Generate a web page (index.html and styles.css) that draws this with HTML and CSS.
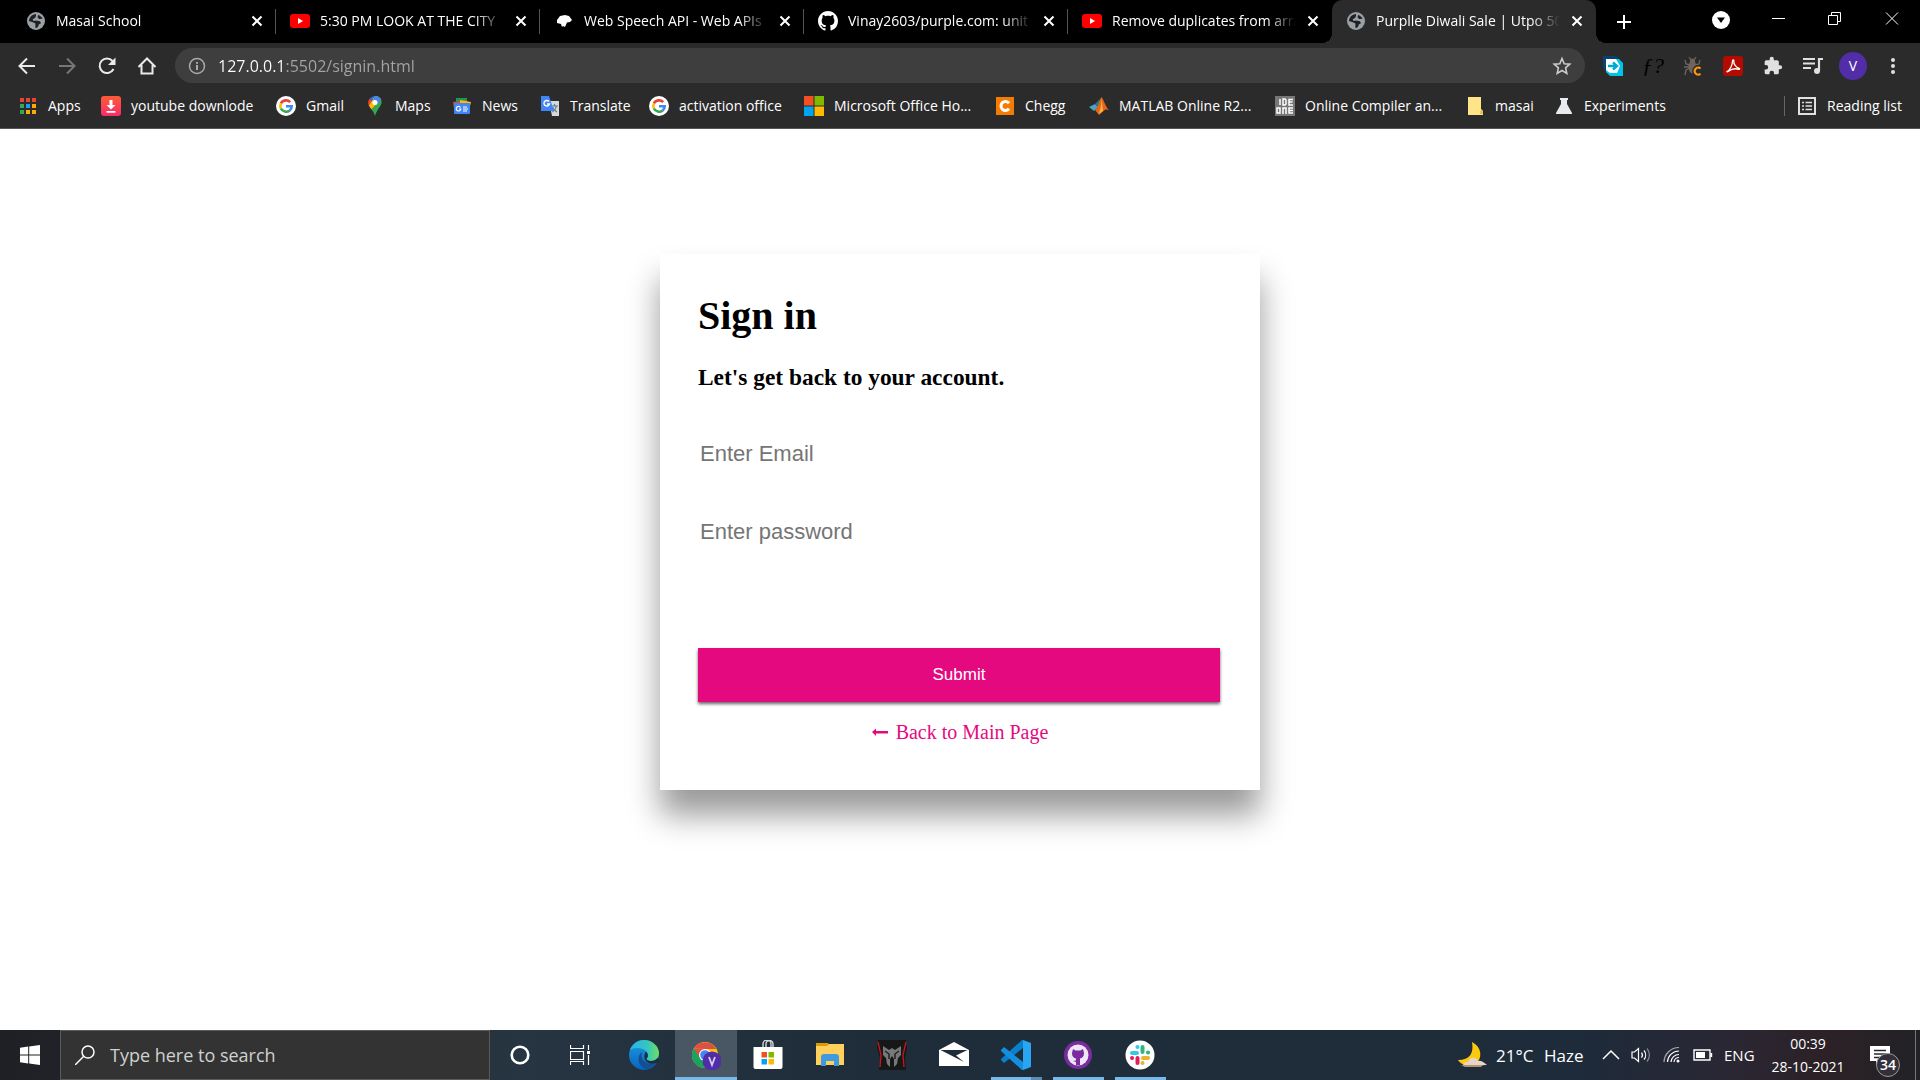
FILE: index.html
```html
<!DOCTYPE html>
<html lang="en">
<head>
<meta charset="utf-8">
<title>Purplle Diwali Sale | Utpo 50% off</title>
<link rel="stylesheet" href="styles.css">
</head>
<body>
<svg class="defs" aria-hidden="true">
  <symbol id="globe" viewBox="0 0 20 20"><circle cx="10" cy="10" r="9" fill="#9aa0a6"/><path d="M10 3c-3 .2-5 1.600-6.500 4.500L2.800 10l4 1.200 2.600 1.300v4.600c2.500 0 3-1.600 3.400-3.500l2.200-1.400-1-1.900-4-.9-2.500.5-.8-1.600 2.600-1.600.7-2zM12 4l-.4 2.200L13 8l3.600-.2C16 6 14 4.500 12 4z" fill="#202124"/></symbol>
  <symbol id="youtube" viewBox="0 0 20 20"><rect y="3" width="20" height="14" rx="3" fill="#f00"/><path d="M8 7l5 3-5 3z" fill="#fff"/></symbol>
  <symbol id="close" viewBox="0 0 12 12"><path d="M1.500 1.500l9 9M10.500 1.500l-9 9" stroke="#fff" stroke-width="2" fill="none"/></symbol>
  <symbol id="octocat" viewBox="0 0 16 16"><path d="M8 0C3.580 0 0 3.580 0 8c0 3.540 2.290 6.530 5.470 7.590.4.070.55-.17.55-.38 0-.19-.01-.82-.01-1.490-2.010.37-2.530-.49-2.690-.94-.09-.23-.48-.94-.82-1.130-.28-.15-.68-.52-.01-.53.63-.01 1.080.58 1.230.82.72 1.210 1.870.87 2.330.66.07-.52.28-.87.51-1.070-1.780-.2-3.640-.89-3.640-3.950 0-.87.31-1.590.82-2.150-.08-.2-.36-1.020.08-2.120 0 0 .67-.21 2.200.82.640-.18 1.320-.27 2-.27s1.360.09 2 .27c1.530-1.040 2.200-.82 2.200-.82.44 1.100.16 1.920.08 2.120.51.56.82 1.270.82 2.150 0 3.070-1.870 3.750-3.650 3.950.29.25.54.73.54 1.480 0 1.070-.01 1.930-.01 2.200 0 .21.15.46.55.38A8.010 8.010 0 0 0 16 8c0-4.420-3.580-8-8-8z"/></symbol>
  <symbol id="google" viewBox="0 0 20 20"><circle cx="10" cy="10" r="10" fill="#fff"/><g fill="none" stroke-width="2.600"><path d="M14.200 6.200A5.700 5.700 0 0 0 4.900 7.500" stroke="#ea4335"/><path d="M4.900 7.500a5.700 5.700 0 0 0 0 5" stroke="#fbbc05"/><path d="M4.900 12.500a5.700 5.700 0 0 0 8.800 1.900" stroke="#34a853"/><path d="M13.700 14.400a5.700 5.700 0 0 0 2-4.200H10" stroke="#4285f4"/></g></symbol>
  <symbol id="winflag" viewBox="0 0 20 20"><path d="M0 0h9.500v9.500H0z" fill="#f25022"/><path d="M10.500 0H20v9.500h-9.500z" fill="#7fba00"/><path d="M0 10.500h9.500V20H0z" fill="#00a4ef"/><path d="M10.500 10.500H20V20h-9.500z" fill="#ffb900"/></symbol>
</svg>

<header class="browser">
  <div class="tabs">
    <div class="tab"><svg class="ico"><use href="#globe"/></svg><span class="title">Masai School</span><button class="x" aria-label="Close tab"><svg><use href="#close"/></svg></button></div>
    <div class="tab"><svg class="ico"><use href="#youtube"/></svg><span class="title">5:30 PM LOOK AT THE CITY</span><button class="x" aria-label="Close tab"><svg><use href="#close"/></svg></button></div>
    <div class="tab"><svg class="ico" viewBox="0 0 20 20"><path d="M3 9l3-4 5-1 4 1 3 4-2 2-3 .5-2 4.500-2-1-1 1-1-3-4-1z" fill="#fff"/></svg><span class="title">Web Speech API - Web APIs</span><button class="x" aria-label="Close tab"><svg><use href="#close"/></svg></button></div>
    <div class="tab"><svg class="ico" fill="#fff"><use href="#octocat"/></svg><span class="title">Vinay2603/purple.com: unit</span><button class="x" aria-label="Close tab"><svg><use href="#close"/></svg></button></div>
    <div class="tab last"><svg class="ico"><use href="#youtube"/></svg><span class="title">Remove duplicates from arra</span><button class="x" aria-label="Close tab"><svg><use href="#close"/></svg></button></div>
    <div class="tab active"><svg class="ico"><use href="#globe"/></svg><span class="title">Purplle Diwali Sale | Utpo 50</span><button class="x" aria-label="Close tab"><svg><use href="#close"/></svg></button></div>
    <button class="new-tab" aria-label="New tab"><svg class="s16" viewBox="0 0 16 16"><path d="M8 1v14M1 8h14" stroke="#fff" stroke-width="2"/></svg></button>
    <div class="window-controls">
      <button aria-label="Search tabs"><svg class="ico" viewBox="0 0 20 20"><circle cx="10" cy="11" r="9" fill="#fff"/><path d="M6 8.500h8L10 14z" fill="#000"/></svg></button>
      <button aria-label="Minimize"><svg class="s16" viewBox="0 0 16 16"><path d="M2 7.500h13" stroke="#fff"/></svg></button>
      <button aria-label="Restore"><svg class="s16" viewBox="0 0 16 16"><path d="M1.500 4.500h9v9h-9zM4.500 4V1.500h9v9H11" fill="none" stroke="#fff"/></svg></button>
      <button aria-label="Close"><svg class="s16" viewBox="0 0 16 16"><path d="M2 1.500l12 12M14 1.500l-12 12" stroke="#fff"/></svg></button>
    </div>
  </div>

  <div class="toolbar">
    <button class="tool" aria-label="Back"><svg class="ico" viewBox="0 0 20 20"><path d="M18 10H3M10 2.500L2.500 10l7.500 7.500" fill="none" stroke="#e8eaed" stroke-width="2"/></svg></button>
    <button class="tool" aria-label="Forward"><svg class="ico" viewBox="0 0 20 20"><path d="M2 10h15M10 2.500l7.500 7.500-7.500 7.500" fill="none" stroke="#777" stroke-width="2"/></svg></button>
    <button class="tool" aria-label="Reload"><svg class="ico" viewBox="0 0 20 20"><path d="M16.500 13A7.300 7.300 0 1 1 15.500 5" fill="none" stroke="#e8eaed" stroke-width="2"/><path d="M18.500 1.500v7.500H11z" fill="#e8eaed"/></svg></button>
    <button class="tool" aria-label="Home"><svg class="ico" viewBox="0 0 20 20"><path d="M1.500 11L10 2.500l8.500 8.500M4.500 9v8.500h11V9" fill="none" stroke="#e8eaed" stroke-width="2"/></svg></button>
    <div class="omnibox">
      <svg class="ico" viewBox="0 0 20 20"><circle cx="10" cy="10" r="7.500" fill="none" stroke="#aaa" stroke-width="1.500"/><path d="M10 9v5M10 6v1.800" stroke="#aaa" stroke-width="2"/></svg>
      <input class="url" type="text" aria-label="Address" value="127.0.0.1:5502/signin.html">
      <button class="bare" aria-label="Bookmark this page"><svg class="ico" viewBox="0 0 20 20"><path d="M10 2.500l2.200 5.200 5.600.5-4.200 3.700 1.200 5.500-4.800-2.900-4.800 2.900 1.200-5.500-4.200-3.700 5.600-.5z" fill="none" stroke="#ccc" stroke-width="1.600"/></svg></button>
    </div>
    <div class="extensions">
      <button class="tool" aria-label="Share extension"><svg class="ico" viewBox="0 0 20 20"><path d="M0 0h13l3 3v12H3l-3-3z" fill="#064273"/><path d="M3 3h13l4 4v13H7l-4-4z" fill="#00c4e6"/><path d="M3 3h10l4 7-3 7H7l-4-3z" fill="#fff"/><path d="M5 10h8M10 6.500l4 3.500-4 3.500" fill="none" stroke="#00a9d4" stroke-width="2.400"/></svg></button>
      <button class="tool fx" aria-label="Function help">ƒ?</button>
      <button class="tool" aria-label="Bug extension"><svg class="ico" viewBox="0 0 20 20"><g stroke="#6d645d" stroke-width="1.300" fill="none"><path d="M6 1l2 3M13 1l-2 3M2 4l1 4 4 1M17 4l-1 4-4 1M1 11h6M2 19l1-5 4-2M12 11h6"/></g><ellipse cx="9.500" cy="11" rx="4" ry="6.500" fill="#6d645d"/><circle cx="9.500" cy="5" r="2.500" fill="#6d645d"/><path d="M17.500 12.500a3.500 3.500 0 1 0 0 5.200" fill="none" stroke="#2b2b2b" stroke-width="5"/><path d="M17.500 12.500a3.500 3.500 0 1 0 0 5.200" fill="none" stroke="#ff9410" stroke-width="2.200"/></svg></button>
      <button class="tool" aria-label="PDF tools"><svg class="ico" viewBox="0 0 20 20"><rect width="20" height="20" rx="3" fill="#b30b00"/><path d="M4 15.500c3-1.500 5.500-6.500 5.500-10.500 0-1.500 1.500-1.500 1.300 0-.3 3 2 6.500 5.400 7.300.8.300.5 1.200-.4 1-3.300-1-7.800 0-10.300 2-1 .8-2 .7-1.500.2z" fill="none" stroke="#fff" stroke-width="1.300"/></svg></button>
      <button class="tool" aria-label="Extensions"><svg class="ico" viewBox="0 0 24 24"><path d="M20.500 11H19V7a2 2 0 0 0-2-2h-4V3.500a2.500 2.500 0 0 0-5 0V5H4a2 2 0 0 0-2 2v3.800h1.500a2.700 2.700 0 0 1 0 5.400H2V20a2 2 0 0 0 2 2h3.800v-1.500a2.700 2.700 0 0 1 5.400 0V22H17a2 2 0 0 0 2-2v-4h1.500a2.500 2.500 0 0 0 0-5z" fill="#e0e0e0"/></svg></button>
      <button class="tool" aria-label="Media controls"><svg class="ico" viewBox="0 0 20 20"><path d="M0 3h12M0 7.500h12M0 12h8" stroke="#e0e0e0" stroke-width="2"/><path d="M16 15V3h4" fill="none" stroke="#e0e0e0" stroke-width="2.200"/><circle cx="14" cy="15" r="3" fill="#e0e0e0"/></svg></button>
      <button class="tool" aria-label="Profile"><span class="avatar">V</span></button>
      <button class="tool" aria-label="Menu"><svg class="ico" viewBox="0 0 20 20"><g fill="#e0e0e0"><circle cx="10" cy="4" r="2"/><circle cx="10" cy="10" r="2"/><circle cx="10" cy="16" r="2"/></g></svg></button>
    </div>
  </div>

  <nav class="bookmarks">
    <a href="#"><svg class="ico" viewBox="0 0 20 20"><path d="M2 2h4v4H2zM8 2h4v4H8zM14 2h4v4h-4z" fill="#ea4335"/><path d="M2 8h4v4H2zM2 14h4v4H2z" fill="#34a853"/><path d="M8 8h4v4H8z" fill="#1a9cf0"/><path d="M14 8h4v4h-4zM8 14h4v4H8zM14 14h4v4h-4z" fill="#fbab05"/></svg>Apps</a>
    <a href="#"><svg class="ico" viewBox="0 0 20 20"><defs><linearGradient id="dl" x2="0" y2="1"><stop stop-color="#ff5a36"/><stop offset="1" stop-color="#f72c68"/></linearGradient></defs><rect width="20" height="20" rx="3" fill="url(#dl)"/><path d="M8.500 4h3v5h3L10 13.500 5.500 9h3zM5.500 15h9v1.800h-9z" fill="#fff"/></svg>youtube downlode</a>
    <a href="#"><svg class="ico"><use href="#google"/></svg>Gmail</a>
    <a href="#"><svg class="ico" viewBox="0 0 20 20"><path d="M10 0a6.800 6.800 0 0 0-5.300 2.500L8 6z" fill="#1a73e8"/><path d="M4.700 2.500a7 7 0 0 0-.8 7.300L8 6z" fill="#ea4335"/><path d="M10 0c3 0 5.200 1.600 6.200 4L6.500 13.500c-1-1.300-2-2.500-2.600-3.700z" fill="#fbbc04"/><path d="M10 0c3 0 5.200 1.600 6.200 4L12 8.500 8 4.500z" fill="#4285f4"/><path d="M16.200 4c2 5.500-4 8-6.200 16-.8-2.800-2-4.800-3.500-6.500z" fill="#34a853"/><circle cx="10" cy="6.500" r="2.500" fill="#fff"/></svg>Maps</a>
    <a href="#"><svg class="ico" viewBox="0 0 20 20"><path d="M4 2h11v8H4z" fill="#0f9d58"/><path d="M1 6l14-2 1 8H2z" fill="#ea4335"/><path d="M8 4l11 2-2 8-9-3z" fill="#fbbc04"/><rect x="2" y="7" width="16" height="11" rx="1" fill="#4285f4"/><path d="M8.500 11.500a2.300 2.300 0 1 0 .3 1.500H7M11 11h4M11 13h5M11 15h4" fill="none" stroke="#fff" stroke-width="1.200"/></svg>News</a>
    <a href="#"><svg class="ico" viewBox="0 0 20 20"><path d="M9 5h10v15H12z" fill="#d5d8dc"/><path d="M11 10h7M14.500 8v2M16.500 10c-.5 3-2 4.500-4 6M12.500 11c1 3 3 4 4.500 5" fill="none" stroke="#607d8b" stroke-width="1.200"/><path d="M1 0h8l5 15H1z" fill="#4285f4"/><path d="M9 5.500A2.800 2.800 0 1 0 9.500 8H7" fill="none" stroke="#fff" stroke-width="1.400"/></svg>Translate</a>
    <a href="#"><svg class="ico"><use href="#google"/></svg>activation office</a>
    <a href="#"><svg class="ico"><use href="#winflag"/></svg>Microsoft Office Ho...</a>
    <a href="#"><svg class="ico" viewBox="0 0 20 20"><rect x="1" y="1" width="18" height="18" fill="#f57c00"/><path d="M14 7.200a4.500 4.500 0 1 0 0 5.600" fill="none" stroke="#fff" stroke-width="3"/></svg>Chegg</a>
    <a href="#"><svg class="ico" viewBox="0 0 20 20"><path d="M0 11l6-3 3 3-4 4z" fill="#4aa5c4"/><path d="M6 8l6-6-3 9z" fill="#31708f"/><path d="M12.500 1c2 2 4 10 7.500 13-3-1-4-1-6 1.500L10 19l-4-5c3-2 4-9 6.500-13z" fill="#e2661a"/><path d="M12.500 1c.5 5-1 13-3 17l4.500-3z" fill="#ffb03b"/></svg>MATLAB Online R2...</a>
    <a href="#"><svg class="ico" viewBox="0 0 20 20"><path d="M0 0h20v20H0z" fill="#777"/><path d="M5 3v6M8 3v6h2l1-1V4l-1-1zM18 3.500h-4v5.500h4M14 6h3.500M2 12h3v5H2zM8 18v-6h3v6M18 12h-4v5h4M14 14.500h4" fill="none" stroke="#fff" stroke-width="1.500"/></svg>Online Compiler an...</a>
    <a href="#"><svg class="ico" viewBox="0 0 20 20"><path d="M3 1h13v12l2 2v4H3z" fill="#ffe48a"/><path d="M16 13l2 2v3h-3z" fill="#e8bd45"/></svg>masai</a>
    <a href="#"><svg class="ico" viewBox="0 0 20 20"><path d="M6 2h8v2h-1v4l5 9v1H2v-1l5-9V4H6z" fill="#e8eaed"/></svg>Experiments</a>
    <a href="#" class="reading"><svg class="ico" viewBox="0 0 20 20"><path d="M2 2h16v16H2z" fill="none" stroke="#e0e0e0" stroke-width="2"/><path d="M5 6.500h2M5 10h2M5 13.500h2M8.500 6.500H15M8.500 10H15M8.500 13.500H15" stroke="#e0e0e0" stroke-width="1.600"/></svg>Reading list</a>
  </nav>
</header>

<main class="page">
  <form class="card">
    <h1>Sign in</h1>
    <h3>Let's get back to your account.</h3>
    <input class="field" type="email" placeholder="Enter Email" aria-label="Enter Email">
    <input class="field" type="password" placeholder="Enter password" aria-label="Enter password">
    <button class="submit" type="submit">Submit</button>
    <a class="back" href="#"><svg class="s16" viewBox="0 0 16 16"><path d="M0 8l4-3.500V7h12v2.500H4V12z" fill="#e5097f"/></svg>Back to Main Page</a>
  </form>
</main>

<footer class="taskbar">
  <button class="start" aria-label="Start"><svg class="ico" viewBox="0 0 20 20" fill="#fff"><path d="M0 2.800l8.200-1.200v7.900H0zM9.200 1.400L20 0v9.500H9.200zM0 10.500h8.200v7.900L0 17.200zM9.200 10.500H20V20L9.200 18.600z"/></svg></button>
  <label class="search"><svg class="ico" viewBox="0 0 20 20"><circle cx="13" cy="7" r="6" fill="none" stroke="#fff" stroke-width="1.500"/><path d="M8.500 11.500L0 20" stroke="#fff" stroke-width="1.500"/></svg><input type="text" placeholder="Type here to search" aria-label="Type here to search"></label>
  <button class="sys" aria-label="Cortana"><svg class="ico" viewBox="0 0 20 20"><circle cx="10" cy="10" r="8.300" fill="none" stroke="#fff" stroke-width="2.600"/></svg></button>
  <button class="sys" aria-label="Task View"><svg class="ico" viewBox="0 0 20 20"><path d="M.5 0v3.500h13V0M.5 20v-3.500h13V20M.5 6.500h13v8H.5zM18.500 0v5M18.500 10v10" fill="none" stroke="#fff" stroke-width="1.200"/><path d="M17 6h3v3h-3z" fill="#fff"/></svg></button>
  <div class="apps">
    <button aria-label="Edge"><svg viewBox="0 0 30 30"><defs><linearGradient id="e1" x2="1"><stop stop-color="#2bb3e8"/><stop offset=".6" stop-color="#35c6c0"/><stop offset="1" stop-color="#6fe05a"/></linearGradient><linearGradient id="e2" x2="0" y2="1"><stop stop-color="#1b9de2"/><stop offset="1" stop-color="#0a62bd"/></linearGradient></defs><circle cx="15" cy="15" r="15" fill="url(#e2)"/><path d="M1 10C3 4 9 0 15 0c8 0 15 6 15 13 0 5-4 8-8 8-3 0-5-1-4-3 2-2 1-7-4-9C9 7 4 8 1 10z" fill="url(#e1)"/><path d="M13 12c-5 3-5 13 3 17 5 0 9-3 11-6-4 2-9 1-12-2-3-3-3-6-2-9z" fill="#124f94"/><path d="M17 11.500c2 2 2.500 5 1 6.500-1.500 2 1 3 4 3 3 0 5-1.200 6.500-3l2 1-1 4h-2c-5 2-11 0-12-5-.5-3 .5-5 1.500-6.500z" fill="#1f2d3a"/></svg></button>
    <button class="current" aria-label="Chrome"><svg viewBox="0 0 30 30"><circle cx="14" cy="15" r="13" fill="#fbc116"/><path d="M14 15L2.700 8.500A13 13 0 0 0 14 28l4-7z" fill="#1aa260"/><path d="M2.700 8.500A13 13 0 0 1 25.300 9H14z" fill="#dd5144"/><path d="M2.700 8.500L9 18l5-9z" fill="#dd5144"/><path d="M3 9.500l6 9 5 9C3 28-1 17 3 9.500z" fill="#1aa260"/><circle cx="14" cy="15" r="6" fill="#fff"/><circle cx="14" cy="15" r="4.800" fill="#4285f4"/><circle cx="21" cy="21" r="9.500" fill="#512da8"/><path d="M18 17l3 8 3-8" fill="none" stroke="#d8cef0" stroke-width="1.800"/></svg></button>
    <button aria-label="Store"><svg viewBox="0 0 30 30"><path d="M10 8V4a4 4 0 0 1 8 0v4M13 8V4a3.500 3.500 0 0 1 7 0v4" fill="none" stroke="#d5d8da" stroke-width="1.400"/><path d="M.5 7h29v20a2 2 0 0 1-2 2h-25a2 2 0 0 1-2-2z" fill="#fff"/><path d="M8.500 12H14v5.500H8.500z" fill="#f25022"/><path d="M15.500 12H21v5.500h-5.500z" fill="#7fba00"/><path d="M8.500 19H14v5.500H8.500z" fill="#00a4ef"/><path d="M15.500 19H21v5.500h-5.500z" fill="#ffb900"/></svg></button>
    <button aria-label="File Explorer"><svg viewBox="0 0 30 30"><path d="M1 3h12l2 3H1z" fill="#dc9a05"/><path d="M1 6h11l2-2h15v21H1z" fill="#ffd05c"/><path d="M6 26V17a3 3 0 0 1 3-3h12a3 3 0 0 1 3 3v9h-5v-5h-8v5z" fill="#3f9ae0"/></svg></button>
    <button aria-label="PredatorSense"><svg viewBox="0 0 30 30"><path d="M1 0h28l1 8-2 10 1 12H2L3 18 0 8z" fill="#171717"/><path d="M1 2l3 13-1 12M29 2l-3 13 1 12" fill="none" stroke="#c8181e" stroke-width="1.300"/><path d="M6 6l6 4 3-2 3 2 6-4v9l-3 3-1 6-3 3v-8l-2-3-2 3v8l-3-3-1-6-3-3z" fill="#77787a"/><path d="M8 11l4 3v5M22 11l-4 3v5" fill="none" stroke="#222" stroke-width="1.500"/></svg></button>
    <button aria-label="Mail"><svg viewBox="0 0 30 30"><path d="M0 10l15-8 15 8v16H0z" fill="#fff"/><path d="M1.500 10h27L17 15.500l8 6.500z" fill="#1f2d3a"/></svg></button>
    <button class="running stacked" aria-label="Visual Studio Code"><svg viewBox="0 0 30 30"><path d="M22 0l8 3v24l-8 3z" fill="#29a6f1"/><path d="M22 8L3 23l-3-3v-1L21 0h1z" fill="#0a7fcb"/><path d="M22 22L3 7l-3 3v1l21 19h1z" fill="#148fe0"/></svg></button>
    <button class="running" aria-label="GitHub Desktop"><svg viewBox="0 0 30 30"><circle cx="15" cy="15" r="14" fill="#7a2ba0"/><circle cx="15" cy="15" r="10.500" fill="#eee5f4"/><path d="M10 9l2.500 1.500h5L20 9l1 4c0 4-2 5-4 5.500v6.500h-4v-3l-3-1 3-.5v-2c-2-.5-4-1.500-4-5.500z" fill="#7a2ba0"/></svg></button>
    <button class="running" aria-label="Slack"><svg viewBox="0 0 30 30"><circle cx="15" cy="15" r="14.500" fill="#fff"/><g stroke-width="4" stroke-linecap="round"><path d="M7 13h5M12.500 7v.1" stroke="#36c5f0"/><path d="M17.500 7v5M23 12.500h.1" stroke="#2eb67d"/><path d="M18 18h5M17.500 23v.1" stroke="#ecb22e"/><path d="M12.500 18v5M7 18h.1" stroke="#e01e5a"/></g></svg></button>
  </div>
  <div class="tray">
    <svg class="moon" viewBox="0 0 30 26"><path d="M15 0c10 5 11 17 3 22-6 3-14 1-17-4 12 0 16-7 14-18z" fill="#fdc90e"/><path d="M6 24c0-4 4-5 5-4 1-5 8-6 10-1 4-1 6 2 9 4z" fill="#e6d5c4"/><path d="M4 23h22l-2 2H8z" fill="#b98f72"/></svg>
    <span class="temp">21°C</span><span class="haze">Haze</span>
    <svg class="ico" viewBox="0 0 20 20"><path d="M3 14l8-8 8 8" fill="none" stroke="#fff" stroke-width="1.500"/></svg>
    <svg class="ico" viewBox="0 0 20 20"><path d="M1 7v6h2.500l4 3.500v-13L3.500 7z" fill="none" stroke="#fff" stroke-width="1.200"/><path d="M10.500 7.500a4 4 0 0 1 0 5M13 5.500a7 7 0 0 1 0 9" fill="none" stroke="#fff" stroke-width="1.200"/><path d="M16 3.500a10 10 0 0 1 0 13" fill="none" stroke="#888" stroke-width="1.200"/></svg>
    <svg class="ico" viewBox="0 0 20 20"><g fill="none" stroke="#fff" stroke-width="1.200"><path d="M2 17A15 15 0 0 1 17 2.500" stroke="#aaa"/><path d="M5.500 17A11.500 11.500 0 0 1 17 6"/><path d="M9 17a8 8 0 0 1 8-7.500"/><path d="M12 17a5 5 0 0 1 5-4.500"/></g><circle cx="16" cy="16" r="1.500" fill="#fff"/></svg>
    <svg class="ico" viewBox="0 0 20 20"><path d="M1 5h16v10H1zM18.500 8v4" fill="none" stroke="#fff" stroke-width="1.400"/><path d="M3 7h9v6H3z" fill="#fff"/></svg>
    <span class="lang">ENG</span>
    <div class="clock"><span>00:39</span><span>28-10-2021</span></div>
    <button class="notify" aria-label="Notifications"><svg class="ico" viewBox="0 0 20 20"><path d="M0 1h20v15h-9l-5 4v-4H0z" fill="#fff"/><path d="M4 5.500h12M4 9h12M4 12.500h6" stroke="#2a2530" stroke-width="1.300"/></svg><span class="badge">34</span></button>
  </div>
</footer>
</body>
</html>
```
FILE: styles.css
```css
* { box-sizing: border-box; }

body {
  margin: 0;
  min-height: 100vh;
  display: flex;
  flex-direction: column;
  background: #fff;
  font-family: "Open Sans", "Noto Sans", sans-serif;
}

button {
  border: 0;
  padding: 0;
  background: none;
  color: inherit;
  font: inherit;
  display: flex;
  align-items: center;
  justify-content: center;
}

.defs { display: none; }
.ico { width: 20px; height: 20px; flex: none; }
.s16 { width: 16px; height: 16px; flex: none; }

/* Browser frame */
.browser { background: #2b2b2b; color: #fff; font-size: 14px; }

.tabs { display: flex; height: 43px; padding-left: 12px; background: #000; }
.tab {
  position: relative;
  display: flex;
  align-items: center;
  gap: 10px;
  width: 264px;
  min-width: 0;
  padding: 0 12px 2px 14px;
}
.tab:not(.last):not(.active)::after {
  content: "";
  position: absolute;
  right: 0;
  top: 9px;
  width: 1px;
  height: 25px;
  background: #555;
}
.tab.active { background: #2b2b2b; border-radius: 10px 10px 0 0; }
.tab.active::before, .tab.active::after {
  content: "";
  position: absolute;
  bottom: 0;
  width: 10px;
  height: 10px;
}
.tab.active::before { left: -10px; background: radial-gradient(circle at 0 0, #000 10px, #2b2b2b 10px); }
.tab.active::after { right: -10px; background: radial-gradient(circle at 100% 0, #000 10px, #2b2b2b 10px); }
.title {
  flex: 1;
  overflow: hidden;
  white-space: nowrap;
  mask-image: linear-gradient(to right, #000 155px, transparent 184px);
}
.x { width: 14px; height: 20px; }
.x svg { width: 12px; height: 12px; }
.new-tab { width: 56px; }
.window-controls { display: flex; margin-left: auto; padding-bottom: 5px; }
.window-controls button { width: 57px; }

.toolbar { display: flex; align-items: center; height: 45px; padding: 0 7px; }
.tool { width: 40px; height: 36px; flex: none; }
.omnibox {
  flex: 1;
  display: flex;
  align-items: center;
  gap: 11px;
  height: 35px;
  margin: 0 8px;
  padding: 0 13px 0 12px;
  border-radius: 18px;
  background: #3e3e3e;
}
.url {
  flex: 1;
  min-width: 0;
  border: 0;
  padding: 0;
  font: 16px "Open Sans", "Noto Sans", sans-serif;
  color: transparent;
  background: linear-gradient(to right, #fff 67px, #a5a5a5 67px);
  background-clip: text;
}
.extensions { display: flex; }
.fx { color: #000; font: italic 22px "Liberation Serif", serif; }
.avatar {
  width: 28px;
  height: 28px;
  border-radius: 50%;
  background: #512da8;
  line-height: 28px;
  text-align: center;
}

.bookmarks {
  display: grid;
  grid-template-columns: 83px 175px 89px 87px 88px 109px 155px 191px 94px 186px 190px 89px 1fr auto;
  align-items: center;
  height: 41px;
  padding: 0 18px 5px;
  border-bottom: 1px solid #555;
}
.bookmarks a {
  display: flex;
  align-items: center;
  gap: 10px;
  color: #fff;
  text-decoration: none;
  white-space: nowrap;
}
.bookmarks .reading { border-left: 1px solid #666; padding-left: 12px; }

/* Sign-in page */
.page { flex: 1; display: flex; justify-content: center; align-items: flex-start; padding-top: 125px; }
.card {
  width: 600px;
  display: flex;
  flex-direction: column;
  padding: 39px 40px 46px 38px;
  background: #fff;
  box-shadow: 0 25px 30px rgba(0, 0, 0, .4);
  font-family: "Liberation Serif", "Times New Roman", serif;
  font-size: 20px;
}
.card h1 { margin: 0 0 24px; font-size: 40px; line-height: 46px; }
.card h3 { margin: 0 0 36px; line-height: 28px; }
.field {
  height: 54px;
  margin-bottom: 24px;
  padding: 0 2px;
  border: 0;
  background: none;
  font: 22px "Liberation Sans", Arial, sans-serif;
}
.field::placeholder { color: #757575; }
.submit {
  height: 54px;
  margin-top: 65px;
  background: #e5097f;
  color: #fff;
  font: 17px "Liberation Sans", Arial, sans-serif;
  box-shadow: 0 2px 3px rgba(0, 0, 0, .6);
}
.back {
  display: flex;
  align-items: center;
  justify-content: center;
  gap: 8px;
  margin-top: 18px;
  padding-left: 2px;
  line-height: 24px;
  color: #e5097f;
  text-decoration: none;
}

/* Desktop taskbar */
.taskbar {
  display: flex;
  height: 50px;
  color: #fff;
  background: linear-gradient(to right, #1f2026 0, #202228 3%, #263541 27%, #1f2d3a 45%, #1f2d3b 75%, #1d2b3a 82%, #2a2734 90%, #2c2126 95%, #222226 100%);
}
.start { width: 60px; }
.search {
  display: flex;
  align-items: center;
  gap: 15px;
  width: 430px;
  padding-left: 14px;
  background: #333;
  border: 1px solid #5a5a5a;
}
.search input {
  flex: 1;
  min-width: 0;
  border: 0;
  padding: 0;
  background: none;
  font: 18px "Open Sans", "Noto Sans", sans-serif;
}
.search input::placeholder { color: #d0d0d0; }
.sys { width: 60px; }
.apps { display: flex; padding-left: 3px; }
.apps button { position: relative; width: 62px; }
.apps svg { width: 30px; height: 30px; }
.apps .current { background: #495663; box-shadow: inset 0 -3px #76b9ed; }
.apps .running::after {
  content: "";
  position: absolute;
  left: 6px;
  right: 5px;
  bottom: 0;
  height: 3px;
  background: #76b9ed;
}
.apps .stacked::after { background: linear-gradient(to right, #76b9ed 40px, #5c8cb3 40px); }

.tray { display: flex; align-items: center; margin-left: auto; padding-right: 4px; font-size: 17px; }
.moon { width: 30px; height: 26px; margin-right: 9px; }
.temp { width: 48px; }
.haze { width: 56px; }
.tray .ico { margin-right: 11px; }
.tray .lang { width: 36px; font-size: 15px; }
.clock {
  display: flex;
  flex-direction: column;
  width: 96px;
  font-size: 14px;
  line-height: 23px;
  text-align: center;
}
.tray .notify { position: relative; width: 60px; height: 50px; padding-right: 11px; border-right: 1px solid #777; }
.tray .notify .ico { margin: 0; }
.badge {
  position: absolute;
  left: 20px;
  top: 23px;
  width: 24px;
  height: 24px;
  border: 1px solid #999;
  border-radius: 50%;
  background: #33303a;
  font-size: 14px;
  font-weight: 600;
  line-height: 21px;
}
```
